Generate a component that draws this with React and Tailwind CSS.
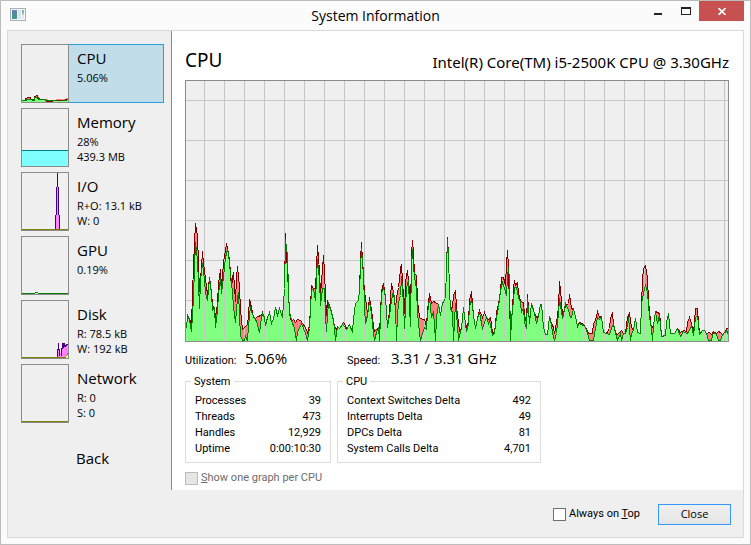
import React from "react";

// Each series is a flat list of x, load pairs; loads are measured up from the base line.
const USER = [
  1,13,2,26,4,22,6,10,8,44,9,74,10,99,12,81,13,58,14,33,15,61,17,78,19,61,20,48,22,41,24,63,26,48,27,31,29,34,30,14,
  32,31,33,48,35,63,36,48,38,64,40,84,42,92,43,88,45,68,47,49,48,34,50,19,52,44,53,49,54,26,55,6,57,1,59,1,60,5,62,1,
  63,16,65,35,66,29,69,24,71,20,73,13,74,9,76,24,77,28,79,24,80,16,82,24,84,29,86,18,88,23,90,34,92,26,94,33,97,24,
  98,38,99,53,100,102,102,86,103,50,104,30,106,21,109,13,111,1,112,10,114,13,116,18,118,13,120,8,122,1,124,13,125,33,
  126,51,128,53,130,41,131,64,132,82,134,61,135,36,137,53,139,53,140,26,141,10,142,26,143,38,146,29,148,21,149,13,
  150,1,152,15,154,13,157,17,159,15,161,12,164,17,167,9,168,23,170,38,173,41,174,51,175,74,176,93,178,69,179,34,
  180,18,182,26,184,40,186,28,188,8,189,1,191,9,193,14,194,1,195,24,196,48,198,54,200,44,202,14,204,26,206,41,208,51,
  210,34,211,1,212,26,213,39,215,46,216,65,218,38,219,13,220,34,221,54,223,61,224,34,225,15,226,78,227,92,228,74,
  229,65,231,53,232,28,234,9,235,1,237,8,239,14,241,12,242,28,244,43,246,24,248,30,250,1,251,24,253,37,255,26,257,38,
  260,43,261,74,262,102,263,86,264,51,265,33,267,29,268,1,270,38,272,16,273,1,274,6,276,13,278,34,280,18,281,10,
  283,18,284,34,286,43,288,26,290,13,292,23,294,29,297,13,299,19,301,24,303,18,304,21,307,6,309,8,311,24,313,34,
  315,51,317,59,319,53,321,46,322,64,323,74,324,61,325,1,326,21,328,41,329,54,331,54,333,44,335,39,336,29,338,34,
  339,19,341,13,342,43,344,18,346,38,349,28,351,18,353,26,355,37,356,37,358,14,360,7,362,7,364,25,366,16,368,4,369,1,
  371,8,373,28,374,43,377,23,378,26,380,38,383,31,385,24,386,24,388,32,391,21,392,15,394,18,398,16,400,14,402,8,
  404,1,408,1,410,13,412,24,414,22,416,25,418,9,421,8,424,7,426,13,428,18,430,9,432,1,435,8,436,1,438,8,440,8,442,14,
  443,24,445,1,446,8,448,11,450,23,452,9,455,8,456,38,458,48,460,57,462,49,464,24,466,13,467,1,468,16,470,30,472,18,
  474,26,476,5,480,6,481,19,483,28,485,8,489,8,492,13,495,5,498,10,501,8,503,9,506,16,508,6,510,24,512,26,514,7,
  517,11,519,11,521,8,523,1,526,1,528,9,531,7,533,1,535,1,537,7,539,8,541,11,543,7,
];

const TOTAL = [
  1,13,2,26,4,22,6,18,8,76,9,98,10,118,12,106,13,78,14,50,16,74,17,90,18,78,20,63,22,47,24,64,26,49,27,36,29,33,30,24,
  32,38,33,58,35,72,36,53,38,79,40,91,41,98,42,94,44,81,46,54,47,63,48,69,50,40,51,64,52,75,54,54,55,31,57,12,59,14,
  62,17,63,26,64,42,66,34,68,24,70,23,72,25,76,26,77,29,79,24,80,16,82,24,84,29,86,18,88,23,90,34,92,26,94,33,97,24,
  98,38,99,53,100,108,101,88,103,50,104,28,106,20,108,22,110,19,112,22,115,21,117,18,120,14,122,9,124,16,125,35,
  126,56,128,53,130,53,131,74,132,96,134,71,135,46,136,60,137,72,138,86,139,69,141,26,142,41,144,36,147,26,149,15,
  151,12,152,15,154,13,158,19,160,16,161,12,164,17,167,9,168,23,170,38,173,41,174,51,175,81,176,99,177,81,179,49,
  180,44,182,28,183,35,184,44,186,31,188,16,189,10,191,12,193,14,194,8,195,28,196,51,198,58,200,44,202,14,204,31,
  205,44,206,58,208,49,210,33,211,44,213,54,214,62,215,73,216,77,217,61,219,28,220,59,222,71,224,51,225,26,226,88,
  227,101,228,88,229,68,231,66,232,41,234,24,237,22,239,22,241,15,242,31,244,48,246,38,248,40,250,39,253,37,255,26,
  257,38,260,43,261,74,262,104,263,86,264,51,265,33,267,34,268,46,270,51,271,34,273,19,274,10,276,13,278,34,280,18,
  281,15,283,19,284,41,286,50,288,26,290,13,292,23,294,31,297,24,299,29,301,24,303,22,305,24,307,9,309,8,311,29,
  313,37,315,51,316,64,318,64,320,56,321,78,322,91,323,74,324,31,325,15,327,31,328,53,329,61,330,56,332,59,333,49,
  335,40,338,39,339,26,341,19,342,47,344,19,346,38,349,28,351,24,353,26,355,37,356,37,358,14,360,7,362,7,364,25,
  366,18,368,14,369,8,371,19,373,34,374,60,376,41,377,24,380,36,383,38,384,47,386,33,388,32,391,21,392,15,394,19,
  398,17,400,14,403,8,407,8,408,18,410,21,412,30,414,24,416,25,418,9,421,8,424,13,425,23,427,29,428,17,430,9,432,7,
  434,9,436,11,438,8,440,8,441,16,442,24,444,28,446,14,448,11,450,23,452,9,455,8,456,38,457,61,458,73,460,76,462,63,
  463,41,465,21,466,13,468,16,470,30,474,28,475,19,476,5,480,6,481,19,483,28,485,8,489,8,492,13,495,9,498,11,501,10,
  502,19,504,24,506,18,508,8,510,33,512,33,513,19,514,8,517,11,519,11,521,8,524,9,526,7,528,10,531,8,533,10,535,9,
  537,7,539,8,541,13,543,13,
];

const BASE = 260;

function trace(series) {
  const points = [];
  for (let i = 0; i < series.length; i += 2) {
    points.push(`${series[i] - 0.5},${BASE + 0.5 - series[i + 1]}`);
  }
  return points.join(" ");
}

function area(series) {
  return `0,${BASE} ${trace(series)} 543,${BASE}`;
}

function CpuGraph() {
  const columns = Array.from({ length: 27 }, (_, i) => 18 + i * 20);
  const rows = Array.from({ length: 6 }, (_, i) => 19 + i * 40);
  return (
    <svg
      role="img"
      aria-label="CPU usage history"
      viewBox="0 0 542 260"
      preserveAspectRatio="none"
      shapeRendering="crispEdges"
      className="block h-full w-full"
    >
      {rows.map((y) => (
        <rect key={y} x="0" y={y} width="542" height="1" fill="#c6c6c6" />
      ))}
      <polygon points={area(TOTAL)} fill="#ff8080" />
      <polygon points={area(USER)} fill="#80ff80" />
      {columns.map((x) => (
        <rect key={x} x={x} y="0" width="1" height="260" fill="#c6c6c6" />
      ))}
      <polyline points={trace(TOTAL)} fill="none" stroke="#800000" />
      <polyline points={trace(USER)} fill="none" stroke="#008000" />
    </svg>
  );
}

const MINI = {
  CPU: (
    <>
      <path d="M0 57V55h3l1-2 2-1 2 0 1 2h3l1-3 2-1 2 3 2 1h6l2 1h5l3-1h6l5-1v5H0z" fill="#ff8080" />
      <path d="M0 57V56l2-1 3 1 1-2h3l2 2h1l2-4h1l2 3 4 0 4 1h6l10 0 6-1v3H0z" fill="#80ff80" />
      <path d="M0 55.500h3l1-2 2-1h2l1 2h3l1-3 2-1 2 3 2 1h5" fill="none" stroke="#800000" />
      <path d="M0 55.500h4l1-1h5l1 1h1l1-3h2l2 2h5l3 1h19l2-1" fill="none" stroke="#008000" />
      <path d="M24 56.500h7M35 55.500h4M43 54.500h2" stroke="#800000" />
    </>
  ),
  Memory: (
    <>
      <rect x="0" y="41" width="46" height="16" fill="#80ffff" />
      <rect x="0" y="41" width="46" height="1" fill="#008080" />
    </>
  ),
  "I/O": (
    <>
      <rect x="34" y="42" width="3" height="14" fill="#ff80ff" />
      <rect x="35" y="14" width="1" height="28" fill="#ff80ff" />
      <path d="M35.500 0v14M34.500 14v28M36.500 14v28M33.500 42v14M37.500 42v14" stroke="#400080" />
      <rect x="0" y="56" width="46" height="1" fill="#808000" />
    </>
  ),
  GPU: <path d="M0 56.500h13M13 55.500h3M16 56.500h30" stroke="#008000" />,
  Disk: (
    <>
      <path d="M35 56V51l2-7 1 8 2 0 1-9 2 2 2-2 1 0v14z" fill="#ff80ff" />
      <path d="M35.500 56V48h1v-6 6h1v7M39.500 55v-8h1v-5 4h1v-4M42.500 42v3h1v-1h1v-1h1" fill="none" stroke="#400080" />
      <path d="M0 56.500h44v-2h1v-2h1" fill="none" stroke="#808000" />
      <path d="M44 57v-2h1v-1h1v3z" fill="#ffff80" />
    </>
  ),
  Network: <rect x="0" y="56" width="46" height="1" fill="#808000" />,
};

const SECTIONS = [
  { name: "CPU", lines: ["5.06%"] },
  { name: "Memory", lines: ["28%", "439.3 MB"] },
  { name: "I/O", lines: ["R+O: 13.1 kB", "W: 0"] },
  { name: "GPU", lines: ["0.19%"] },
  { name: "Disk", lines: ["R: 78.5 kB", "W: 192 kB"] },
  { name: "Network", lines: ["R: 0", "S: 0"] },
];

function SectionButton({ name, lines, selected }) {
  return (
    <button
      type="button"
      aria-pressed={selected}
      className={
        selected
          ? "flex h-[59px] w-full bg-[#c0dde9] text-left outline outline-1 -outline-offset-1 outline-[#26a0da]"
          : "flex h-[59px] w-full text-left"
      }
    >
      <span className="relative h-[59px] w-12 shrink-0 border border-[#8b8b8b] bg-[#f0f0f0]">
        <svg viewBox="0 0 46 57" shapeRendering="crispEdges" className="block h-full w-full" aria-hidden="true">
          {MINI[name]}
        </svg>
      </span>
      <span className="flex flex-col pl-2 pt-[3px]">
        <span className="mb-px text-[15px] leading-[22px]">{name}</span>
        {lines.map((line) => (
          <span key={line} className="text-[11px] leading-[15px]">
            {line}
          </span>
        ))}
      </span>
    </button>
  );
}

function StatGroup({ title, rows, width }) {
  return (
    <fieldset className={`${width} border border-[#dcdcdc] px-[9px] pb-[5px]`}>
      <legend className="-ml-1 px-[3px] pt-[2px] leading-[14px]">{title}</legend>
      <table className="mt-1 w-full">
        <tbody>
          {rows.map(([label, value]) => (
            <tr key={label} className="h-4 leading-4">
              <th scope="row" className="p-0 text-left font-normal">
                {label}
              </th>
              <td className="p-0 text-right">{value}</td>
            </tr>
          ))}
        </tbody>
      </table>
    </fieldset>
  );
}

function TitleBar() {
  return (
    <header className="flex h-[29px] items-start">
      <div className="flex w-[110px] pl-[3px] pt-[7px]">
        <svg width="16" height="13" viewBox="0 0 16 13" shapeRendering="crispEdges" aria-hidden="true">
          <rect x="0.500" y="0.500" width="15" height="12" fill="#f4f6f7" stroke="#a9b1b6" />
          <rect x="2" y="2" width="5" height="9" fill="#4c8f9c" />
          <rect x="2" y="2" width="5" height="3" fill="#5d86b0" />
          <rect x="3" y="6" width="3" height="4" fill="#3f9a80" />
          <rect x="8" y="2" width="3" height="9" fill="#dfe3e5" />
          <rect x="12" y="2" width="2" height="3" fill="#7cb0c4" />
          <rect x="12" y="5" width="2" height="2" fill="#a9d3bf" />
          <rect x="12" y="7" width="2" height="4" fill="#e6eaec" />
        </svg>
      </div>
      <h1 className="flex-1 pt-1 text-center text-[14px] leading-[22px]">System Information</h1>
      <div className="flex w-[110px] justify-end">
        <button type="button" aria-label="Minimize" className="flex h-5 w-[27px] items-center justify-center">
          <svg width="9" height="20" shapeRendering="crispEdges">
            <rect x="0" y="12" width="8" height="2" fill="#222" />
          </svg>
        </button>
        <button type="button" aria-label="Maximize" className="flex h-5 w-[27px] items-center justify-center">
          <svg width="10" height="20" shapeRendering="crispEdges">
            <path d="M0 6h10v8H0zM1 8v5h8V8z" fill="#222" fillRule="evenodd" />
          </svg>
        </button>
        <button type="button" aria-label="Close window" className="flex h-5 w-[45px] items-center justify-center bg-[#c75050]">
          <svg width="8" height="7" viewBox="0 0 8 7">
            <path d="M0.500 0 7.500 7M7.500 0 0.500 7" stroke="#fff" strokeWidth="1.600" />
          </svg>
        </button>
      </div>
    </header>
  );
}

export default function App() {
  return (
    <div className="flex min-h-screen flex-col border border-[#bcbcbc] bg-[#fbfbfb] px-[6px] pb-[6px] font-['Open_Sans','Noto_Sans',sans-serif] text-black">
      <TitleBar />
      <div className="flex flex-1 border border-[#d9d9d9] bg-[#efefef]">
        <nav aria-label="Sections" className="w-[163px] shrink-0 pl-[13px] pr-[7px] pt-[13px]">
          <div className="flex flex-col gap-[5px]">
            {SECTIONS.map((section) => (
              <SectionButton key={section.name} {...section} selected={section.name === "CPU"} />
            ))}
          </div>
          <button type="button" className="ml-[55px] mt-6 text-[15px] leading-[22px]">
            Back
          </button>
        </nav>

        <div className="flex min-w-0 flex-1 flex-col">
          <main className="flex flex-1 flex-col border-l border-[#8b8b8b] bg-white pb-[5px] pl-[13px] pr-[14px] font-['Roboto','Noto_Sans',sans-serif] text-[11px]">
            <div className="flex h-[49px] items-end justify-between pb-[7px] font-['Noto_Sans','Open_Sans',sans-serif]">
              <h2 className="text-[19px] leading-[26px]">CPU</h2>
              <p className="text-[15px] leading-[22px]">Intel(R) Core(TM) i5-2500K CPU @ 3.30GHz</p>
            </div>
            <div className="h-[262px] border border-[#8b8b8b] bg-[#efefef]">
              <CpuGraph />
            </div>
            <dl className="flex h-[31px] items-baseline pt-[5px]">
              <dt className="w-[60px]">Utilization:</dt>
              <dd className="w-[102px] font-['Open_Sans','Noto_Sans',sans-serif] text-[15px] leading-[22px]">5.06%</dd>
              <dt className="w-[44px]">Speed:</dt>
              <dd className="font-['Open_Sans','Noto_Sans',sans-serif] text-[15px] leading-[22px]">3.31 / 3.31 GHz</dd>
            </dl>
            <div className="flex gap-[6px]">
              <StatGroup
                title="System"
                width="w-[146px]"
                rows={[
                  ["Processes", "39"],
                  ["Threads", "473"],
                  ["Handles", "12,929"],
                  ["Uptime", "0:00:10:30"],
                ]}
              />
              <StatGroup
                title="CPU"
                width="w-[204px]"
                rows={[
                  ["Context Switches Delta", "492"],
                  ["Interrupts Delta", "49"],
                  ["DPCs Delta", "81"],
                  ["System Calls Delta", "4,701"],
                ]}
              />
            </div>
            <label className="mt-2 flex items-center gap-[3px] leading-[14px] text-[#6d6d6d]">
              <input type="checkbox" disabled className="h-[13px] w-[13px] appearance-none border border-[#bcbcbc] bg-[#e6e6e6]" />
              <span>
                <u>S</u>how one graph per CPU
              </span>
            </label>
          </main>
          <footer className="flex h-[47px] items-center justify-end gap-[18px] pr-3 pt-[2px] font-['Roboto','Noto_Sans',sans-serif] text-[11px]">
            <label className="flex items-center gap-[3px]">
              <input type="checkbox" className="h-[13px] w-[13px] appearance-none border border-[#707070] bg-white checked:bg-[#707070]" />
              <span>
                Always on <u>T</u>op
              </span>
            </label>
            <button
              type="button"
              className="h-[21px] w-[73px] border border-[#3399ff] bg-linear-to-b from-[#f0f0f0] to-[#e5e5e5] font-['Open_Sans','Noto_Sans',sans-serif]"
            >
              Close
            </button>
          </footer>
        </div>
      </div>
    </div>
  );
}
